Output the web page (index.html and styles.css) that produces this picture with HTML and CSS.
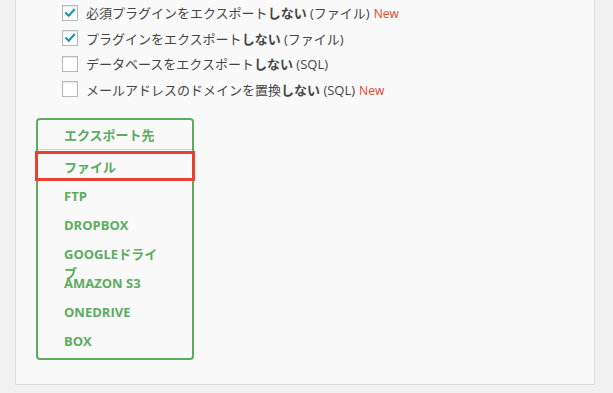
FILE: index.html
```html
<!DOCTYPE html>
<html lang="ja">
<head>
<meta charset="UTF-8">
<title>エクスポート</title>
<link rel="stylesheet" href="styles.css">
</head>
<body>

<main class="panel">

  <!-- 高度なオプション -->
  <ul class="opts">
    <li><span class="cb on"><svg viewBox="0 0 16 16"><path d="M3.6 8.2 L6.6 11.2 L12.6 4.4"/></svg></span><span class="label">必須プラグインをエクスポート<b>しない</b> (ファイル)<span class="new">New</span></span></li>
    <li><span class="cb on"><svg viewBox="0 0 16 16"><path d="M3.6 8.2 L6.6 11.2 L12.6 4.4"/></svg></span><span class="label">プラグインをエクスポート<b>しない</b> (ファイル)</span></li>
    <li><span class="cb"></span><span class="label">データベースをエクスポート<b>しない</b> (SQL)</span></li>
    <li><span class="cb"></span><span class="label">メールアドレスのドメインを置換<b>しない</b> (SQL)<span class="new">New</span></span></li>
  </ul>

  <!-- エクスポート先 -->
  <nav class="dest">
    <div class="dest-head">エクスポート先</div>
    <ul class="dest-list">
      <li class="active">ファイル</li>
      <li>FTP</li>
      <li>DROPBOX</li>
      <li>GOOGLEドライブ</li>
      <li>AMAZON S3</li>
      <li>ONEDRIVE</li>
      <li>BOX</li>
    </ul>
  </nav>

</main>

</body>
</html>
```

FILE: styles.css
```css
:root {
  --bg: #f1f1f1;
  --panel: #f9f9f9;
  --text: #444444;
  --green: #5cab5f;
  --red: #e8412f;
  --blue: #1e8cbe;
}
* { margin: 0; padding: 0; box-sizing: border-box; }
body {
  background: var(--bg);
  color: var(--text);
  font-family: "Open Sans", "Noto Sans CJK JP", sans-serif;
  font-size: 13px;
}
ul { list-style: none; }

/* ---------- パネル ---------- */
.panel {
  margin-left: 15px;
  width: 580px;
  height: 385px;
  background: var(--panel);
  border: 1px solid #dedede;
  border-top: none;
  border-radius: 0 0 2px 2px;
  box-shadow: 0 1px 1px rgba(0,0,0,0.06);
  padding-left: 20px;
}

/* ---------- チェックボックス ---------- */
.opts { padding-left: 26px; }
.opts li {
  height: 25.5px;
  display: flex;
  align-items: center;
  white-space: nowrap;
}
.opts b { font-weight: 700; }
.cb {
  width: 16px;
  height: 16px;
  flex: none;
  margin-right: 8px;
  background: #fff;
  border: 1px solid #b4b9be;
  box-shadow: inset 0 1px 2px rgba(0,0,0,0.1);
  display: flex;
}
.cb svg { width: 14px; height: 14px; }
.cb path { fill: none; stroke: var(--blue); stroke-width: 2.4; stroke-linecap: square; }
.new { color: var(--red); font-size: 12px; margin-left: 4px; }

/* ---------- エクスポート先 ---------- */
.dest {
  margin-top: 16px;
  width: 158px;
  height: 242px;
  border: 2px solid var(--green);
  border-radius: 4px;
  color: var(--green);
  font-weight: 700;
}
.dest-head {
  height: 30px;
  line-height: 30px;
  padding-left: 26px;
  border-bottom: 1px solid #d6d6d6;
}
.dest-list { padding-top: 2px; }
.dest-list li {
  height: 29px;
  line-height: 19px;
  padding: 6px 28px 0 26px;
  text-transform: uppercase;
  position: relative;
}
.dest-list li.active::after {
  content: "";
  position: absolute;
  top: -1px;
  bottom: 0;
  left: -3px;
  right: -3px;
  border: 3px solid var(--red);
}
```
